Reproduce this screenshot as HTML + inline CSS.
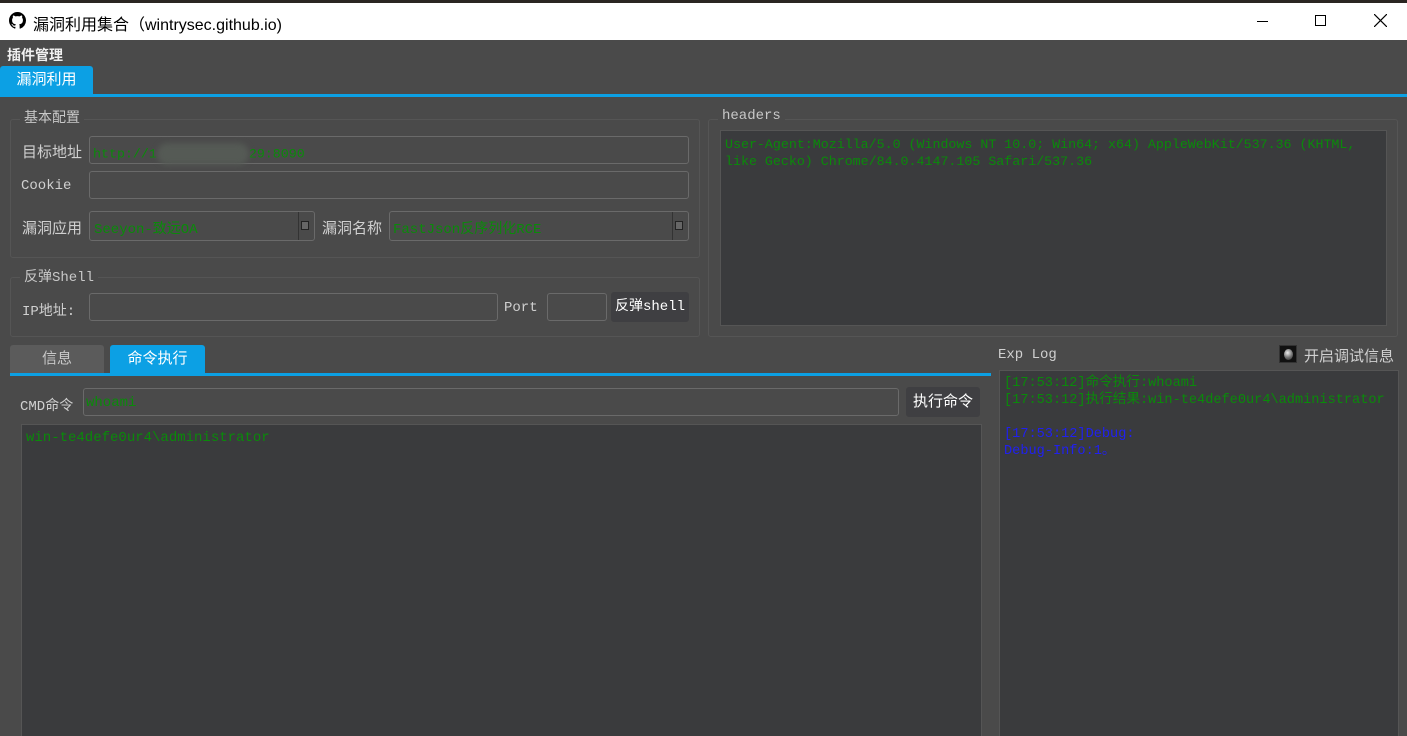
<!DOCTYPE html>
<html><head><meta charset="utf-8"><style>
*{margin:0;padding:0;box-sizing:border-box}
html,body{width:1407px;height:736px;overflow:hidden}
body{background:#4a4a4a;position:relative;font-family:"Liberation Sans","Noto Sans CJK SC",sans-serif;font-size:14px;color:#d8d8d8}
.a{position:absolute}
.mono{font-family:"Liberation Mono","Noto Sans CJK SC",monospace;font-size:13.3px}
.inp{position:absolute;border:1px solid #6a6a6a;border-radius:3px;background:#4a4a4a}
.grp{position:absolute;border:1px solid #555;border-radius:3px}
.gt{position:absolute;background:#4a4a4a;padding:0 4px;color:#c8c8c8}
.ta{position:absolute;background:#3a3b3d;border:1px solid #555}
.g{color:#0a8a0a}
.lbl{position:absolute;color:#d0d0d0}
</style></head><body>
<div class="a" style="left:0;top:0;width:1407px;height:3px;background:#2a2622"></div>
<div class="a" style="left:0;top:3px;width:1407px;height:37px;background:#fff"></div>
<svg class="a" style="left:9px;top:12px" width="17" height="17" viewBox="0 0 16 16"><path fill="#000" d="M8 0C3.58 0 0 3.580 0 8c0 3.54 2.29 6.53 5.47 7.59.4.07.55-.17.55-.38v-1.33c-2.230.48-2.7-1.07-2.7-1.07-.36-.92-.89-1.17-.89-1.17-.73-.5.05-.49.05-.49.8.06 1.23.83 1.23.83.71 1.22 1.87.87 2.33.66.07-.52.28-.87.51-1.07-1.78-.2-3.64-.89-3.64-3.95 0-.87.31-1.59.82-2.15-.08-.2-.36-1.020.08-2.12 0 0 .67-.21 2.2.82.64-.18 1.32-.27 2-.27.68 0 1.36.09 2 .27 1.53-1.04 2.2-.82 2.2-.82.44 1.1.16 1.92.08 2.12.51.56.82 1.27.82 2.15 0 3.07-1.87 3.75-3.65 3.95.29.25.54.73.54 1.48v2.2c0 .21.15.46.55.38A8.013 8.013 0 0016 8c0-4.42-3.58-8-8-8z"/></svg>
<div class="a" style="left:33px;top:11px;font-size:16px;color:#000">漏洞利用集合（wintrysec.github.io)</div>
<div class="a" style="left:1257px;top:21px;width:11px;height:1px;background:#000"></div>
<div class="a" style="left:1315px;top:15px;width:11px;height:11px;border:1px solid #000"></div>
<svg class="a" style="left:1374px;top:14px" width="13" height="13"><path d="M0 0L13 13M13 0L0 13" stroke="#000" stroke-width="1.2"/></svg>

<div class="a" style="left:7px;top:45px;font-weight:bold;color:#f0f0f0;font-size:14px">插件管理</div>
<div class="a" style="left:0;top:66px;width:93px;height:29px;background:#0ca0e4;border-radius:3px 3px 0 0;color:#fff;font-size:15px;text-align:center;line-height:28px">漏洞利用</div>
<div class="a" style="left:0;top:94px;width:1407px;height:3px;background:#0ca0e4"></div>

<div class="grp" style="left:10px;top:119px;width:690px;height:139px"></div>
<div class="gt" style="left:20px;top:107px">基本配置</div>
<div class="lbl" style="left:22px;top:141px;font-size:15px">目标地址</div>
<div class="inp" style="left:89px;top:136px;width:600px;height:28px"></div>
<div class="a mono g" style="left:93px;top:143px">http://1<span style="display:inline-block;width:92px;height:22px;background:#555a55;border-radius:12px;vertical-align:middle;filter:blur(3px)"></span>29:8090</div>
<div class="lbl mono" style="left:21px;top:178px;font-size:14px">Cookie</div>
<div class="inp" style="left:89px;top:171px;width:600px;height:28px"></div>
<div class="lbl" style="left:22px;top:217px;font-size:15px">漏洞应用</div>
<div class="inp" style="left:89px;top:211px;width:226px;height:30px"></div>
<div class="a" style="left:298px;top:212px;width:1px;height:28px;background:#333"></div>
<div class="a" style="left:301px;top:221px;width:8px;height:9px;border:1px solid #222;background:#666"></div>
<div class="a mono g" style="left:94px;top:218px;font-size:14px">Seeyon-致远OA</div>
<div class="lbl" style="left:322px;top:217px;font-size:15px">漏洞名称</div>
<div class="inp" style="left:389px;top:211px;width:300px;height:30px"></div>
<div class="a" style="left:672px;top:212px;width:1px;height:28px;background:#333"></div>
<div class="a" style="left:675px;top:221px;width:8px;height:9px;border:1px solid #222;background:#666"></div>
<div class="a mono g" style="left:393px;top:218px;font-size:14px">FastJson反序列化RCE</div>

<div class="grp" style="left:10px;top:277px;width:690px;height:60px"></div>
<div class="gt mono" style="left:20px;top:266px;font-size:14px">反弹Shell</div>
<div class="lbl mono" style="left:22px;top:300px;font-size:14px">IP地址:</div>
<div class="inp" style="left:89px;top:293px;width:409px;height:28px"></div>
<div class="lbl mono" style="left:504px;top:300px;font-size:14px">Port</div>
<div class="inp" style="left:547px;top:293px;width:60px;height:28px"></div>
<div class="a mono" style="left:611px;top:292px;width:78px;height:30px;background:#3f3f42;border-radius:3px;color:#fff;font-size:14px;line-height:30px;text-align:center">反弹shell</div>

<div class="grp" style="left:708px;top:119px;width:690px;height:218px"></div>
<div class="gt mono" style="left:718px;top:108px;font-size:14px">headers</div>
<div class="ta" style="left:720px;top:130px;width:667px;height:196px"></div>
<div class="a mono g" style="left:725px;top:136px;line-height:17px;width:660px">User-Agent:Mozilla/5.0 (Windows NT 10.0; Win64; x64) AppleWebKit/537.36 (KHTML,<br>like Gecko) Chrome/84.0.4147.105 Safari/537.36</div>

<div class="a" style="left:10px;top:345px;width:94px;height:28px;background:#5b5b5b;border-radius:3px 3px 0 0;color:#c8c8c8;font-size:15px;text-align:center;line-height:28px">信息</div>
<div class="a" style="left:110px;top:345px;width:95px;height:28px;background:#0ca0e4;border-radius:3px 3px 0 0;color:#fff;font-size:15px;text-align:center;line-height:28px">命令执行</div>
<div class="a" style="left:10px;top:373px;width:981px;height:3px;background:#0ca0e4"></div>
<div class="lbl mono" style="left:20px;top:395px;font-size:14px">CMD命令</div>
<div class="inp" style="left:83px;top:388px;width:816px;height:28px"></div>
<div class="a mono g" style="left:86px;top:395px;font-size:14px">whoami</div>
<div class="a" style="left:906px;top:387px;width:74px;height:30px;background:#3f3f42;border-radius:3px;color:#fff;font-size:15px;line-height:30px;text-align:center">执行命令</div>
<div class="ta" style="left:21px;top:424px;width:961px;height:320px"></div>
<div class="a mono g" style="left:26px;top:430px;font-size:14px">win-te4defe0ur4\administrator</div>

<div class="lbl mono" style="left:998px;top:347px;font-size:14px">Exp Log</div>
<div class="a" style="left:1279px;top:345px;width:18px;height:18px;background:#111;border:1px solid #333"><div style="margin:3px 4px;width:9px;height:11px;border-radius:50%;background:radial-gradient(circle at 40% 35%,#eee,#777 50%,#222)"></div></div>
<div class="lbl" style="left:1304px;top:345px;font-size:15px">开启调试信息</div>
<div class="ta" style="left:999px;top:370px;width:400px;height:370px"></div>
<div class="a mono" style="left:1004px;top:375px;line-height:17px;white-space:pre;font-size:13.6px"><span class="g">[17:53:12]命令执行:whoami
[17:53:12]执行结果:win-te4defe0ur4\administrator</span>

<span style="color:#2020f0">[17:53:12]Debug:
Debug-Info:1。</span></div>
</body></html>
